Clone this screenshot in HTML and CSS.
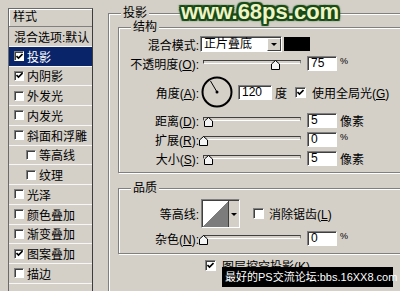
FILE: index.html
```html
<!DOCTYPE html>
<html lang="zh-CN">
<head>
    <meta charset="UTF-8">
    <title>图层样式 - 投影</title>
    <link rel="stylesheet" href="styles.css">
</head>
<body>

    <div class="dialog">
        <!-- Liste des styles à gauche -->
        <div class="styles-list">
            <div class="list-head">样式</div>
            <div class="list-row">混合选项:默认</div>
            <div class="list-row selected"><span class="cb"><svg width="7" height="7" viewBox="0 0 7 7"><path d="M0.5 3 L2.5 5 L6.5 1" fill="none" stroke="#000" stroke-width="1.6"/></svg></span>投影</div>
            <div class="list-row"><span class="cb"><svg width="7" height="7" viewBox="0 0 7 7"><path d="M0.5 3 L2.5 5 L6.5 1" fill="none" stroke="#000" stroke-width="1.6"/></svg></span>内阴影</div>
            <div class="list-row"><span class="cb"></span>外发光</div>
            <div class="list-row"><span class="cb"></span>内发光</div>
            <div class="list-row"><span class="cb"></span>斜面和浮雕</div>
            <div class="list-row sub"><span class="cb"></span>等高线</div>
            <div class="list-row sub"><span class="cb"></span>纹理</div>
            <div class="list-row"><span class="cb"></span>光泽</div>
            <div class="list-row"><span class="cb"></span>颜色叠加</div>
            <div class="list-row"><span class="cb"></span>渐变叠加</div>
            <div class="list-row"><span class="cb"><svg width="7" height="7" viewBox="0 0 7 7"><path d="M0.5 3 L2.5 5 L6.5 1" fill="none" stroke="#000" stroke-width="1.6"/></svg></span>图案叠加</div>
            <div class="list-row"><span class="cb"></span>描边</div>
        </div>

        <!-- Panneau principal -->
        <div class="main">
            <fieldset class="group outer">
                <legend class="legend-outer">投影</legend>

                <fieldset class="group inner">
                    <legend>结构</legend>
                    <div class="rows">
                        <div class="row first">
                            <span class="lbl">混合模式:</span>
                            <div class="select"><span class="select-text">正片叠底</span><span class="drop"><span class="arrow"></span></span></div>
                            <span class="swatch"></span>
                        </div>
                        <div class="row">
                            <span class="lbl">不透明度(<u>O</u>):</span>
                            <div class="slider"><div class="track"></div><svg class="thumb" style="--v:0.75" width="9" height="10" viewBox="0 0 9 10"><path d="M0.5 4 L4.5 0.5 L8.5 4 L8.5 9.5 L0.5 9.5 Z" fill="#f4f4f4" stroke="#000"/></svg></div>
                            <span class="num">75</span>
                            <span class="unit pct">%</span>
                        </div>
                        <div class="row angle">
                            <span class="lbl">角度(<u>A</u>):</span>
                            <svg class="dial" width="32" height="32" viewBox="0 0 32 32">
                                <circle cx="16" cy="16" r="14.5" fill="none" stroke="#000" stroke-width="2"/>
                                <line x1="16" y1="16" x2="9.5" y2="5" stroke="#000" stroke-width="1"/>
                                <circle cx="16" cy="16" r="1.5" fill="#000"/>
                            </svg>
                            <span class="num wide">120</span>
                            <span class="unit">度</span>
                            <span class="cb big"><svg width="7" height="7" viewBox="0 0 7 7"><path d="M0.5 3 L2.5 5 L6.5 1" fill="none" stroke="#000" stroke-width="1.6"/></svg></span>
                            <span class="cb-label">使用全局光(<u>G</u>)</span>
                        </div>
                        <div class="row">
                            <span class="lbl">距离(<u>D</u>):</span>
                            <div class="slider"><div class="track"></div><svg class="thumb" style="--v:0.05" width="9" height="10" viewBox="0 0 9 10"><path d="M0.5 4 L4.5 0.5 L8.5 4 L8.5 9.5 L0.5 9.5 Z" fill="#f4f4f4" stroke="#000"/></svg></div>
                            <span class="num">5</span>
                            <span class="unit">像素</span>
                        </div>
                        <div class="row">
                            <span class="lbl">扩展(<u>R</u>):</span>
                            <div class="slider"><div class="track"></div><svg class="thumb" style="--v:0" width="9" height="10" viewBox="0 0 9 10"><path d="M0.5 4 L4.5 0.5 L8.5 4 L8.5 9.5 L0.5 9.5 Z" fill="#f4f4f4" stroke="#000"/></svg></div>
                            <span class="num">0</span>
                            <span class="unit pct">%</span>
                        </div>
                        <div class="row">
                            <span class="lbl">大小(<u>S</u>):</span>
                            <div class="slider"><div class="track"></div><svg class="thumb" style="--v:0.05" width="9" height="10" viewBox="0 0 9 10"><path d="M0.5 4 L4.5 0.5 L8.5 4 L8.5 9.5 L0.5 9.5 Z" fill="#f4f4f4" stroke="#000"/></svg></div>
                            <span class="num">5</span>
                            <span class="unit">像素</span>
                        </div>
                    </div>
                </fieldset>

                <fieldset class="group quality">
                    <legend>品质</legend>
                    <div class="rows tight">
                        <div class="row contour-row">
                            <span class="lbl">等高线:</span>
                            <div class="contour"><span class="contour-preview"></span><span class="contour-drop"><span class="arrow"></span></span></div>
                            <span class="cb big aa"></span>
                            <span class="cb-label">消除锯齿(<u>L</u>)</span>
                        </div>
                        <div class="row">
                            <span class="lbl">杂色(<u>N</u>):</span>
                            <div class="slider"><div class="track"></div><svg class="thumb" style="--v:0" width="9" height="10" viewBox="0 0 9 10"><path d="M0.5 4 L4.5 0.5 L8.5 4 L8.5 9.5 L0.5 9.5 Z" fill="#f4f4f4" stroke="#000"/></svg></div>
                            <span class="num">0</span>
                            <span class="unit pct">%</span>
                        </div>
                    </div>
                </fieldset>

                <div class="knockout">
                    <span class="cb big"><svg width="7" height="7" viewBox="0 0 7 7"><path d="M0.5 3 L2.5 5 L6.5 1" fill="none" stroke="#000" stroke-width="1.6"/></svg></span>
                    <span class="cb-label">图层挖空投影(<u>K</u>)</span>
                </div>
            </fieldset>
        </div>
    </div>

    <!-- Filigranes par-dessus la capture -->
    <div class="watermark">www.68ps.com</div>
    <div class="banner">最好的PS交流论坛:bbs.16XX8.com</div>

</body>
</html>
```

FILE: styles.css
```css
html, body {
    margin: 0;
    padding: 0;
    overflow: hidden;
}
body {
    position: relative;
    width: 400px;
    height: 291px;
    background-color: #d4d0c8;
    font-family: "Liberation Sans", "Noto Sans CJK SC", sans-serif;
    font-size: 12px;
    color: #000;
}
.dialog {
    display: flex;
    align-items: flex-start;
}

/* Liste des styles */
.styles-list {
    flex: none;
    margin: 8px 0 0 8px;
    width: 85px;
    height: 300px;
    box-sizing: border-box;
    border: 1px solid #6a6a6a;
    border-right-color: #3c3c3c;
}
.list-head {
    height: 17px;
    line-height: 17px;
    padding-left: 4px;
    border-bottom: 1px solid #808080;
    box-shadow: inset 1px 1px 0 #fff;
}
.list-row {
    display: flex;
    align-items: center;
    gap: 3px;
    height: 19.75px;
    box-sizing: border-box;
    padding-left: 5px;
    border-bottom: 1px solid #f6f6f6;
    white-space: nowrap;
    overflow: hidden;
}
.list-row:first-of-type {
    padding-left: 4px;
}
.list-row.sub {
    padding-left: 17px;
}
.list-row.selected {
    background-color: #0a246a;
    color: #fff;
}

/* Cases à cocher */
.cb {
    display: inline-flex;
    align-items: center;
    justify-content: center;
    flex: none;
    width: 10px;
    height: 10px;
    box-sizing: border-box;
    background: #fff;
    border: 1px solid;
    border-color: #808080 #fff #fff #808080;
    box-shadow: inset 1px 1px 0 #404040;
}
.cb.big {
    width: 11px;
    height: 11px;
}
.cb-label {
    margin-left: 6px;
    white-space: nowrap;
}

/* Groupes */
.main {
    flex: none;
    width: 320px;
    margin: 6px 0 0 15px;
}
.group {
    margin: 0;
    padding: 0;
    min-width: 0;
    border: 1px solid #808080;
    box-shadow: 1px 1px 0 #fff, inset 1px 1px 0 #fff;
}
.group legend {
    margin-left: 12px;
    padding: 0 2px;
    line-height: 14px;
    background-color: #d4d0c8;
}
.group .legend-outer {
    margin-left: 3px;
}
.outer {
    padding: 0 0 40px 9px;
}
.inner {
    padding: 2px 0 6px 0;
}
.quality {
    margin-top: 8px;
    padding: 4px 0 7px 0;
}
.rows {
    display: flex;
    flex-direction: column;
    gap: 4px;
}
.rows.tight {
    gap: 3px;
}
.row {
    display: flex;
    align-items: center;
    height: 15px;
}
.row.first {
    height: 16px;
}
.row.angle {
    height: 34px;
}
.row.contour-row {
    height: 29px;
}
.lbl {
    flex: none;
    width: 80px;
    text-align: right;
    white-space: nowrap;
}

/* Liste déroulante */
.select {
    display: flex;
    flex: none;
    width: 82px;
    height: 16px;
    margin-left: 1px;
    box-sizing: border-box;
    background: #fff;
    border: 1px solid;
    border-color: #808080 #fff #fff #808080;
    box-shadow: inset 1px 1px 0 #404040;
}
.select-text {
    flex: 1;
    padding-left: 3px;
    line-height: 14px;
}
.drop {
    display: flex;
    align-items: center;
    justify-content: center;
    width: 14px;
    margin: 1px 0 0 0;
    box-sizing: border-box;
    background: #d4d0c8;
    border: 1px solid;
    border-color: #fff #404040 #404040 #fff;
}
.arrow {
    width: 0;
    height: 0;
    border-left: 3px solid transparent;
    border-right: 3px solid transparent;
    border-top: 3px solid #000;
}
.swatch {
    flex: none;
    width: 26px;
    height: 14px;
    margin-left: 2px;
    background: #000;
}

/* Curseurs */
.slider {
    position: relative;
    flex: none;
    width: 102px;
    height: 15px;
    margin-left: 2px;
}
.track {
    height: 2px;
    margin: 4px 2px 0 2px;
    background: #d4d0c8;
    border: 1px solid #404040;
    border-bottom-color: #fff;
    border-right-color: #808080;
}
.thumb {
    position: absolute;
    top: 4px;
    left: calc(2px + var(--v) * 96px - 4px);
}
.num {
    flex: none;
    width: 30px;
    height: 15px;
    margin-left: 4px;
    box-sizing: border-box;
    padding-left: 3px;
    line-height: 13px;
    background: #fff;
    border: 1px solid;
    border-color: #808080 #fff #fff #808080;
    box-shadow: inset 1px 1px 0 #404040;
}
.num.wide {
    width: 34px;
    margin-left: 5px;
}
.unit {
    margin-left: 3px;
    white-space: nowrap;
}
.unit.pct {
    align-self: flex-start;
    font-size: 9px;
    line-height: 10px;
}
.dial {
    flex: none;
    margin-left: 2px;
}
.row.angle .cb {
    margin-left: 8px;
}

/* Contour */
.contour {
    display: flex;
    flex: none;
    width: 39px;
    height: 29px;
    margin-left: 2px;
    box-sizing: border-box;
    border: 1px solid;
    border-color: #808080 #fff #fff #808080;
    box-shadow: inset 1px 1px 0 #404040;
}
.contour-preview {
    flex: 1;
    margin: 1px 0 0 1px;
    background: linear-gradient(to bottom right, #fff 50%, #7c7c7c 50%);
}
.contour-drop {
    display: flex;
    align-items: center;
    justify-content: center;
    width: 10px;
    margin-top: 1px;
    background: #d4d0c8;
    border-left: 1px solid #404040;
}
.cb.aa {
    margin-left: 13px;
}
.contour-row .cb-label {
    margin-left: 5px;
}

/* Case du bas */
.knockout {
    display: flex;
    align-items: center;
    height: 11px;
    margin: 6px 0 0 87px;
}

/* Filigranes */
.watermark {
    position: absolute;
    left: 181px;
    top: 1px;
    font-family: "Liberation Sans", sans-serif;
    font-weight: bold;
    font-size: 22px;
    line-height: 22px;
    color: #eef4c4;
    text-shadow:
        1px 0 0 #174a17, -1px 0 0 #174a17, 0 1px 0 #174a17, 0 -1px 0 #174a17,
        2px 0 0 #174a17, -2px 0 0 #174a17, 0 2px 0 #174a17, 0 -2px 0 #174a17,
        1px 1px 0 #174a17, -1px -1px 0 #174a17, 1px -1px 0 #174a17, -1px 1px 0 #174a17,
        2px 2px 1px #174a17, -2px -2px 1px #174a17, 2px -2px 1px #174a17, -2px 2px 1px #174a17,
        0 0 4px #6a9a4a;
}
.banner {
    position: absolute;
    left: 222px;
    top: 267px;
    width: 171px;
    height: 20px;
    box-sizing: border-box;
    padding-left: 3px;
    background: #000;
    color: #fff;
    font-size: 11px;
    line-height: 20px;
    white-space: nowrap;
}
```
